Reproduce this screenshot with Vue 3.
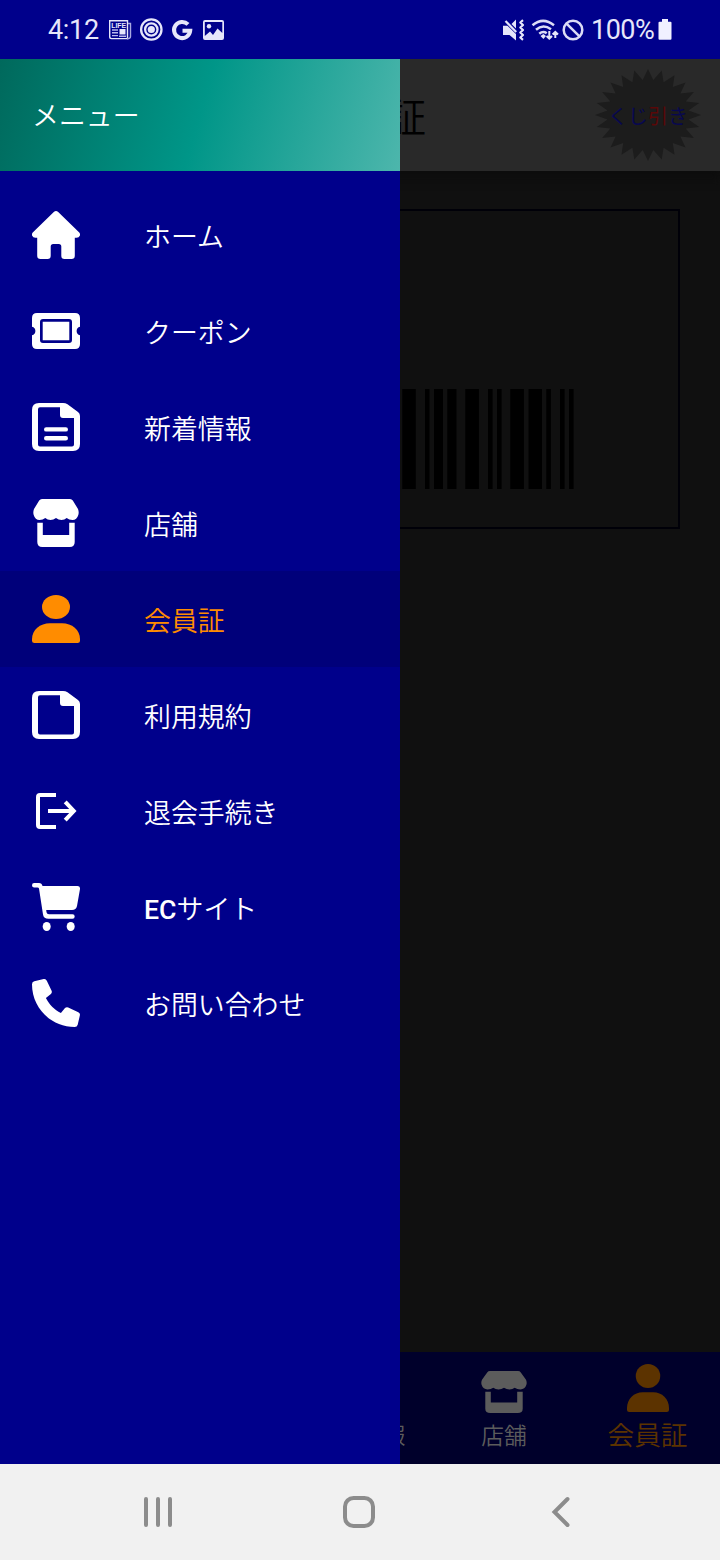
<script setup>
const items = [
  { icon: 'home', label: 'ホーム' },
  { icon: 'ticket', label: 'クーポン' },
  { icon: 'news', label: '新着情報' },
  { icon: 'store', label: '店舗' },
  { icon: 'person', label: '会員証', active: true },
  { icon: 'page', label: '利用規約' },
  { icon: 'exit', label: '退会手続き' },
  { icon: 'cart', label: 'サイト', prefix: 'EC' },
  { icon: 'phone', label: 'お問い合わせ' },
]

const bars = [
  [256.3, 13.5], [279, 4.5], [288, 9], [301.3, 9.2], [319.3, 13.6], [342, 4.6],
  [351, 4.6], [364.3, 13.6], [382.5, 13.5], [400.3, 4.6], [414, 4.6], [423, 4.6],
]

const burst = Array.from({ length: 48 }, (_, i) => {
  const k = i % 2 ? 0.77 : 1
  const a = (i * Math.PI) / 24
  return `${(53 + 53 * k * Math.sin(a)).toFixed(1)},${(46 - 46 * k * Math.cos(a)).toFixed(1)}`
}).join(' ')
</script>

<template>
  <div class="screen">
    <header class="status">
      <span class="clock">4:12</span>
      <svg class="left-icons" width="118" height="24" viewBox="108 18 118 24">
        <g fill="none" stroke="#e6e6fa" stroke-width="1.4">
          <path d="M109.7 20.7H127.5V38.6H111.5Q109.7 38.6 109.7 36.8Z" />
          <path d="M128 23.5H130.5V36.5Q130.5 38.8 127 38.8" stroke="#a8a8e0" />
          <path d="M112 30H118M112 32.8H118M112 35.6H118M119 36.3H126" stroke="#b8b8ec" />
        </g>
        <rect x="119.5" y="29" width="6" height="5.5" fill="#e6e6fa" />
        <text x="111.2" y="27.6" class="life" textLength="15" lengthAdjust="spacingAndGlyphs">LIFE</text>
        <g fill="none" stroke="#e6e6fa" stroke-width="2.3">
          <circle cx="151.3" cy="29.5" r="10.2" />
          <circle cx="151.3" cy="29.5" r="6.2" />
        </g>
        <circle cx="151.3" cy="29.5" r="3.6" fill="#e6e6fa" />
        <path d="M188 24.4A8.1 8.1 0 1 0 190.2 30.8H182.5" fill="none" stroke="#e6e6fa" stroke-width="4" />
        <path
          d="M205 20H222Q224 20 224 22V38Q224 40 222 40H205Q203 40 203 38V22Q203 20 205 20ZM204.8 22V36L210 31.5L213 35L217.5 28.5L222.3 33V22Z"
          fill="#e6e6fa" fill-rule="evenodd" />
        <circle cx="209" cy="26.2" r="2.2" fill="#e6e6fa" />
      </svg>
      <svg class="right-icons" width="84" height="26" viewBox="502 16 84 26">
        <path d="M503 24.8H507.500L516 33V39.500L509.500 34H503ZM511.500 23L516 18.600V27.500Z" fill="#e6e6fa" />
        <path d="M505.500 20L516.200 31" stroke="#e6e6fa" stroke-width="2.200" />
        <path d="M523 19.200L520.300 21.500L523 24L520.300 26.500L523 29L520.300 31.500L523 34L520.300 36.500L523 38.800" fill="none" stroke="#e6e6fa" stroke-width="2.200" stroke-linejoin="round" />
        <g fill="none" stroke="#dcdcf6" stroke-width="2.500">
          <path d="M532.500 24.300Q543 15.500 554 24.300" />
          <path d="M536 28.700Q543 22.500 551 28.200" />
          <path d="M539.300 32.800Q543 29.500 546.700 32.200" />
          <circle cx="573" cy="29" r="9.300" />
          <path d="M566.300 22.400L579.700 35.700" />
        </g>
        <path d="M540.500 35L543.400 33L546 35L543.400 38Z" fill="#e6e6fa" />
        <path d="M549.300 30V37.500M546.600 35L549.300 37.700L552 35M555.300 37V31M552.600 33.500L555.300 30.800L558 33.500" fill="none" stroke="#e6e6fa" stroke-width="2" />
      </svg>
      <span class="percent">100%</span>
      <svg class="battery" width="14" height="22" viewBox="0 0 14 22">
        <path d="M4 0H10V2.700H12.500Q13.500 2.700 13.500 3.700V19.500Q13.500 20.700 12.500 20.700H1.500Q.5 20.700 .5 19.500V3.700Q.5 2.700 1.500 2.700H4Z" fill="#f0f0ff" />
      </svg>
    </header>

    <main class="stage">
      <section class="page">
        <div class="appbar">
          <span class="title">会員証</span>
          <div class="lottery">
            <svg width="106" height="92" viewBox="0 0 106 92"><polygon :points="burst" fill="#1c1c1c" /></svg>
            <span class="lottery-text">くじ<b>引</b>き</span>
          </div>
        </div>
        <div class="body">
          <div class="card">
            <svg width="428" height="100" viewBox="0 0 428 100">
              <rect v-for="b in bars" :key="b[0]" :x="b[0]" y="0" :width="b[1]" height="100" fill="#000" />
            </svg>
          </div>
        </div>
        <nav class="tabs">
          <div class="tab"></div>
          <div class="tab"></div>
          <div class="tab"><span>新着情報</span></div>
          <div class="tab">
            <svg width="48" height="42" viewBox="0 0 48 48" preserveAspectRatio="none"><use href="#i-store" /></svg>
            <span>店舗</span>
          </div>
          <div class="tab current">
            <svg width="42" height="48" viewBox="0 0 48 48" preserveAspectRatio="none"><use href="#i-person" /></svg>
            <span>会員証</span>
          </div>
        </nav>
      </section>

      <aside class="drawer">
        <div class="drawer-head"><span>メニュー</span></div>
        <ul class="menu">
          <li v-for="item in items" :key="item.icon" :class="{ active: item.active }">
            <svg width="48" height="48" viewBox="0 0 48 48"><use :href="'#i-' + item.icon" /></svg>
            <span class="label"><em v-if="item.prefix">{{ item.prefix }}</em>{{ item.label }}</span>
          </li>
        </ul>
      </aside>
    </main>

    <footer class="softkeys">
      <svg width="720" height="96" viewBox="0 0 720 96" fill="none" stroke="#8c8c8c" stroke-width="4" stroke-linecap="round">
        <path d="M146 35V61M158 35V61M170 35V61" />
        <rect x="345" y="34" width="28" height="28" rx="8.5" />
        <path d="M567.500 35L554.500 48L567.500 61" />
      </svg>
    </footer>

    <svg class="defs" width="0" height="0" aria-hidden="true">
      <defs>
        <symbol id="i-home" viewBox="0 0 48 48">
          <path fill="currentColor" d="M21.8 1Q24 -.9 26.2 1L47 21.3Q48.6 23 47.8 24.8Q47 26.8 44.6 26.8H42.8V44.7Q42.8 48 39.5 48H32.5Q29.3 48 29.3 44.7V35.5Q29.3 33 26.8 33H21.2Q18.7 33 18.7 35.5V44.7Q18.7 48 15.5 48H8.5Q5.2 48 5.2 44.7V26.8H3.4Q1 26.8 .2 24.8Q-.6 23 1 21.3Z" />
        </symbol>
        <symbol id="i-ticket" viewBox="0 0 48 48">
          <path fill="currentColor" fill-rule="evenodd" d="M5 6H43Q48 6 48 11V19.8A4.3 4.3 0 0 0 48 28.2V37Q48 42 43 42H5Q0 42 0 37V28.2A4.3 4.3 0 0 0 0 19.8V11Q0 6 5 6ZM11 12Q8 12 8 15V33Q8 36 11 36H37Q40 36 40 33V15Q40 12 37 12ZM10.7 14.8H37.3V33.2H10.7Z" />
        </symbol>
        <symbol id="i-page" viewBox="0 0 48 48">
          <path fill="currentColor" fill-rule="evenodd" d="M7 0H31Q33.5 0 35.5 1.3L46 9Q48 10.6 48 13V41Q48 48 41 48H7Q0 48 0 41V7Q0 0 7 0ZM8 4.3Q6 4.3 6 6.3V41.5Q6 43.5 8 43.5H40Q42 43.5 42 41.5V15H31Q28 15 28 12V4.3Z" />
        </symbol>
        <symbol id="i-news" viewBox="0 0 48 48">
          <use href="#i-page" />
          <path d="M14.2 26.4H33.8M14.2 35.2H33.8" stroke="currentColor" stroke-width="4.4" stroke-linecap="round" />
        </symbol>
        <symbol id="i-store" viewBox="0 0 48 48">
          <path fill="currentColor" d="M10 0H38Q39.8 0 40.8 1.6L46 10Q47.2 13 46.3 16Q44.8 21 40.5 21Q37 21 34.7 19Q32.5 21 29.5 21Q26.5 21 24 19Q21.5 21 18.5 21Q15.5 21 13.3 19Q11 21 7.5 21Q3.2 21 1.7 16Q.8 13 2 10L7.2 1.6Q8.2 0 10 0Z" />
          <path fill="currentColor" d="M5.3 23.8H10.8V36H37.2V23.8H42.7V43Q42.7 48 37.7 48H10.3Q5.3 48 5.3 43Z" />
        </symbol>
        <symbol id="i-person" viewBox="0 0 48 48">
          <ellipse fill="currentColor" cx="24" cy="12" rx="14" ry="12" />
          <path fill="currentColor" d="M0 44C0 35 8 28.3 18 28.3H30C40 28.3 48 35 48 44V46Q48 48 45.5 48H2.5Q0 48 0 46Z" />
        </symbol>
        <symbol id="i-exit" viewBox="0 0 48 48">
          <g fill="none" stroke="currentColor" stroke-width="4">
            <path d="M24 8H8Q6 8 6 10V38Q6 40 8 40H24" />
            <path d="M16 24H41M33.2 14.8L41.8 24L33.2 33.2" />
          </g>
        </symbol>
        <symbol id="i-cart" viewBox="0 0 48 48">
          <path fill="currentColor" d="M2.2 0H7Q9.8 0 10.5 3H45.500Q48.300 3 48 6L45 23Q44.200 27 40 27H14.200L14.500 29.300Q14.900 31.300 17 31.300H40.500Q42.700 31.300 42.700 33.500T40.500 35.800H16.500Q11.700 35.800 11 31.500L7 5.500Q6.700 4.500 5.500 4.500H2.200Q0 4.500 0 2.250T2.200 0Z" />
          <ellipse fill="currentColor" cx="14.700" cy="43.500" rx="4" ry="4.500" />
          <ellipse fill="currentColor" cx="38.700" cy="43.500" rx="4" ry="4.500" />
        </symbol>
        <symbol id="i-phone" viewBox="0 0 48 48">
          <path fill="currentColor" d="M2.300 2.300L11.700 .1Q13.900-.3 14.800 1.700L19.600 11.800Q20.300 13.700 18.900 15L13.900 19.100C17 25.500 22.500 31 28.900 34.100L33 29.100Q34.300 27.700 36.200 28.400L46.300 33.200Q48.300 34.100 47.900 36.300L45.700 45.700Q45.100 48 42.700 48C19 48 0 29 0 5.300Q0 2.900 2.300 2.300Z" />
        </symbol>
      </defs>
    </svg>
  </div>
</template>

<style>
body { margin: 0; background: #f1f1f1; }
</style>

<style scoped>
.screen {
  width: 720px;
  height: 1560px;
  display: flex;
  flex-direction: column;
  overflow: hidden;
  font-family: "Noto Sans CJK JP", sans-serif;
  font-weight: 350;
}
.screen svg { display: block; flex: none; }
.defs { position: absolute; }

.status {
  flex: none;
  height: 59px;
  box-sizing: border-box;
  padding-left: 48px;
  display: flex;
  align-items: center;
  background: #00008b;
  color: #e6e6fa;
  font: 27px/60px Roboto, sans-serif;
}
.clock { width: 60px; letter-spacing: -0.3px; }
.life { font: bold 7px "Liberation Sans", sans-serif; fill: #e6e6fa; }
.right-icons { margin-left: 276px; }
.percent { width: 68px; margin-left: 5px; letter-spacing: -0.5px; }
.battery { margin-left: -1px; }

.stage { flex: none; height: 1405px; position: relative; }
.page { height: 100%; display: flex; flex-direction: column; background: #101010; }
.appbar {
  flex: none;
  height: 112px;
  box-sizing: border-box;
  padding: 0 19px 0 306px;
  display: flex;
  align-items: center;
  justify-content: space-between;
  background: #292929;
  box-shadow: 0 8px 8px #0d0d0d;
}
.title { font-size: 40px; line-height: 60px; color: #000; }
.lottery { display: grid; place-items: center; }
.lottery > * { grid-area: 1 / 1; }
.lottery-text { font-size: 20px; line-height: 24px; padding-top: 1px; font-weight: 400; color: #08084f; }
.lottery-text b { font-weight: 400; color: #5a0808; }

.body { flex: 1; padding: 38px 40px 0; }
.card {
  height: 320px;
  box-sizing: border-box;
  border: 2px solid #000008;
  padding-top: 178px;
  display: flex;
  justify-content: center;
}

.tabs { flex: none; height: 112px; display: flex; background: #00002b; }
.tab {
  width: 144px;
  box-sizing: border-box;
  padding-bottom: 13px;
  display: flex;
  flex-direction: column;
  align-items: center;
  justify-content: flex-end;
  color: #5c5c5c;
  font-size: 22.7px;
  line-height: 32px;
}
.tab svg { margin-bottom: 6px; }
.tab.current { padding-bottom: 14px; padding-right: 1px; color: #5c3300; font-size: 26.7px; }

.drawer {
  position: absolute;
  left: 0;
  top: 0;
  width: 400px;
  height: 100%;
  background: #00008b;
  color: #fff;
}
.drawer-head {
  height: 112px;
  box-sizing: border-box;
  padding: 0 32px 2px;
  display: flex;
  align-items: center;
  background: linear-gradient(105.6deg, #00695c, #009688 50%, #4db6ac);
  font-size: 26.9px;
}
.menu { list-style: none; margin: 0; padding: 16px 0 0; }
.menu li {
  height: 96px;
  box-sizing: border-box;
  padding: 0 32px;
  display: flex;
  align-items: center;
  gap: 64px;
}
.menu li.active { background: #00007a; color: #ff8c00; }
.label { font-size: 26.9px; line-height: 40px; padding-top: 2px; white-space: nowrap; }
.label em { font: 500 26.7px/1 Roboto, sans-serif; }
.softkeys { flex: none; height: 96px; background: #f1f1f1; }
</style>
